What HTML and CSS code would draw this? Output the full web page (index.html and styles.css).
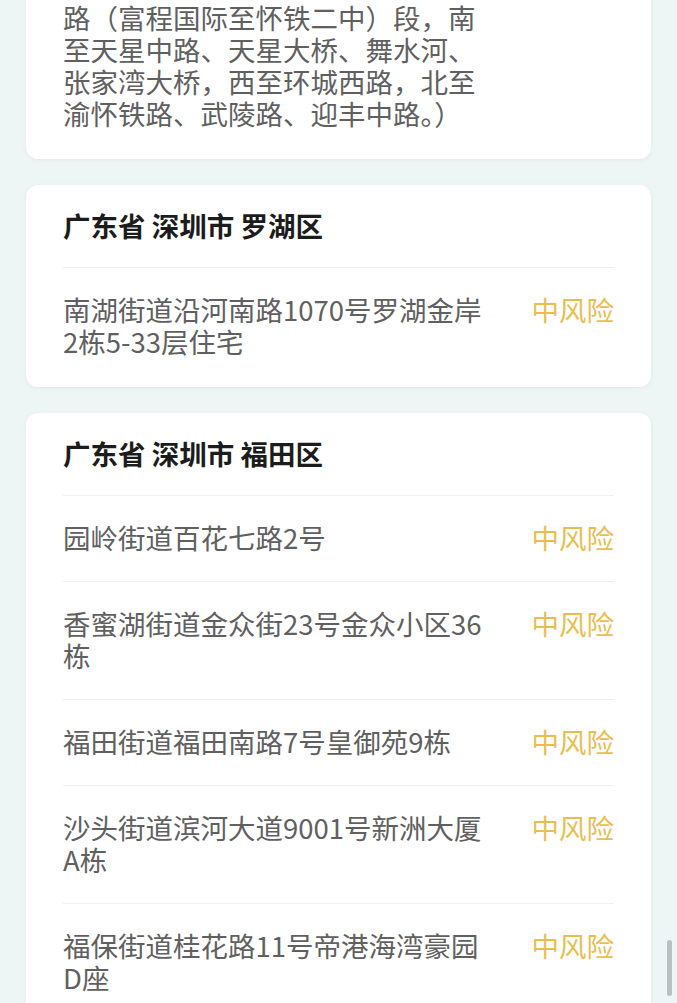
FILE: index.html
```html
<html>
  <head>
    <meta charset="utf-8">
    <title>风险地区</title>
    <link rel="stylesheet" href="styles.css">
  </head>
  <body>
    <div class="area-list">
      <div class="area-card area-card-first">
        <div class="risk-row">
          <div class="risk-addr">路（富程国际至怀铁二中）段，南至天星中路、天星大桥、舞水河、张家湾大桥，西至环城西路，北至渝怀铁路、武陵路、迎丰中路。）</div>
        </div>
      </div>

      <div class="area-card">
        <div class="area-title">广东省 深圳市 罗湖区</div>
        <div class="risk-row">
          <div class="risk-addr">南湖街道沿河南路1070号罗湖金岸2栋5-33层住宅</div>
          <div class="risk-level">中风险</div>
        </div>
      </div>

      <div class="area-card">
        <div class="area-title">广东省 深圳市 福田区</div>
        <div class="risk-row">
          <div class="risk-addr">园岭街道百花七路2号</div>
          <div class="risk-level">中风险</div>
        </div>
        <div class="risk-row">
          <div class="risk-addr">香蜜湖街道金众街23号金众小区36栋</div>
          <div class="risk-level">中风险</div>
        </div>
        <div class="risk-row">
          <div class="risk-addr">福田街道福田南路7号皇御苑9栋</div>
          <div class="risk-level">中风险</div>
        </div>
        <div class="risk-row">
          <div class="risk-addr">沙头街道滨河大道9001号新洲大厦A栋</div>
          <div class="risk-level">中风险</div>
        </div>
        <div class="risk-row">
          <div class="risk-addr">福保街道桂花路11号帝港海湾豪园D座</div>
          <div class="risk-level">中风险</div>
        </div>
      </div>
    </div>

    <div class="scroll-thumb"></div>
  </body>
</html>
```

FILE: styles.css
```css
body {
  margin: 0;
  padding: 0;
  background: #eef6f5;
  font-family: "Noto Sans CJK SC", "Noto Sans", sans-serif;
  overflow: hidden;
}
.area-list {
  display: flex;
  flex-direction: column;
  gap: 26px;
  padding: 0 26px;
}
.area-card {
  background: #fff;
  border-radius: 12px;
  padding: 0 37px;
  box-shadow: 0 1px 4px rgba(120, 150, 150, 0.12);
}
/* list is scrolled, first card starts above the top edge */
.area-card-first {
  margin-top: -26px;
}
.area-title {
  font-size: 27.5px;
  line-height: 32px;
  font-weight: bold;
  color: #1c1c1c;
  padding: 24px 0 26px;
  border-bottom: 1px solid #efefef;
}
.risk-row {
  display: flex;
  justify-content: space-between;
  align-items: flex-start;
  padding: 25px 0 28px;
  border-bottom: 1px solid #efefef;
  font-size: 27.5px;
  line-height: 32px;
}
.risk-row:last-child {
  border-bottom: none;
  padding-bottom: 30px;
}
.area-card-first .risk-row {
  padding: 27px 0 30px;
}
.risk-addr {
  width: 424px;
  color: #606060;
}
.risk-level {
  color: #ebbd4f;
  white-space: nowrap;
}
.scroll-thumb {
  position: fixed;
  right: 5px;
  top: 940px;
  width: 5px;
  height: 56px;
  border-radius: 3px;
  background: #b9c0c1;
}
```
